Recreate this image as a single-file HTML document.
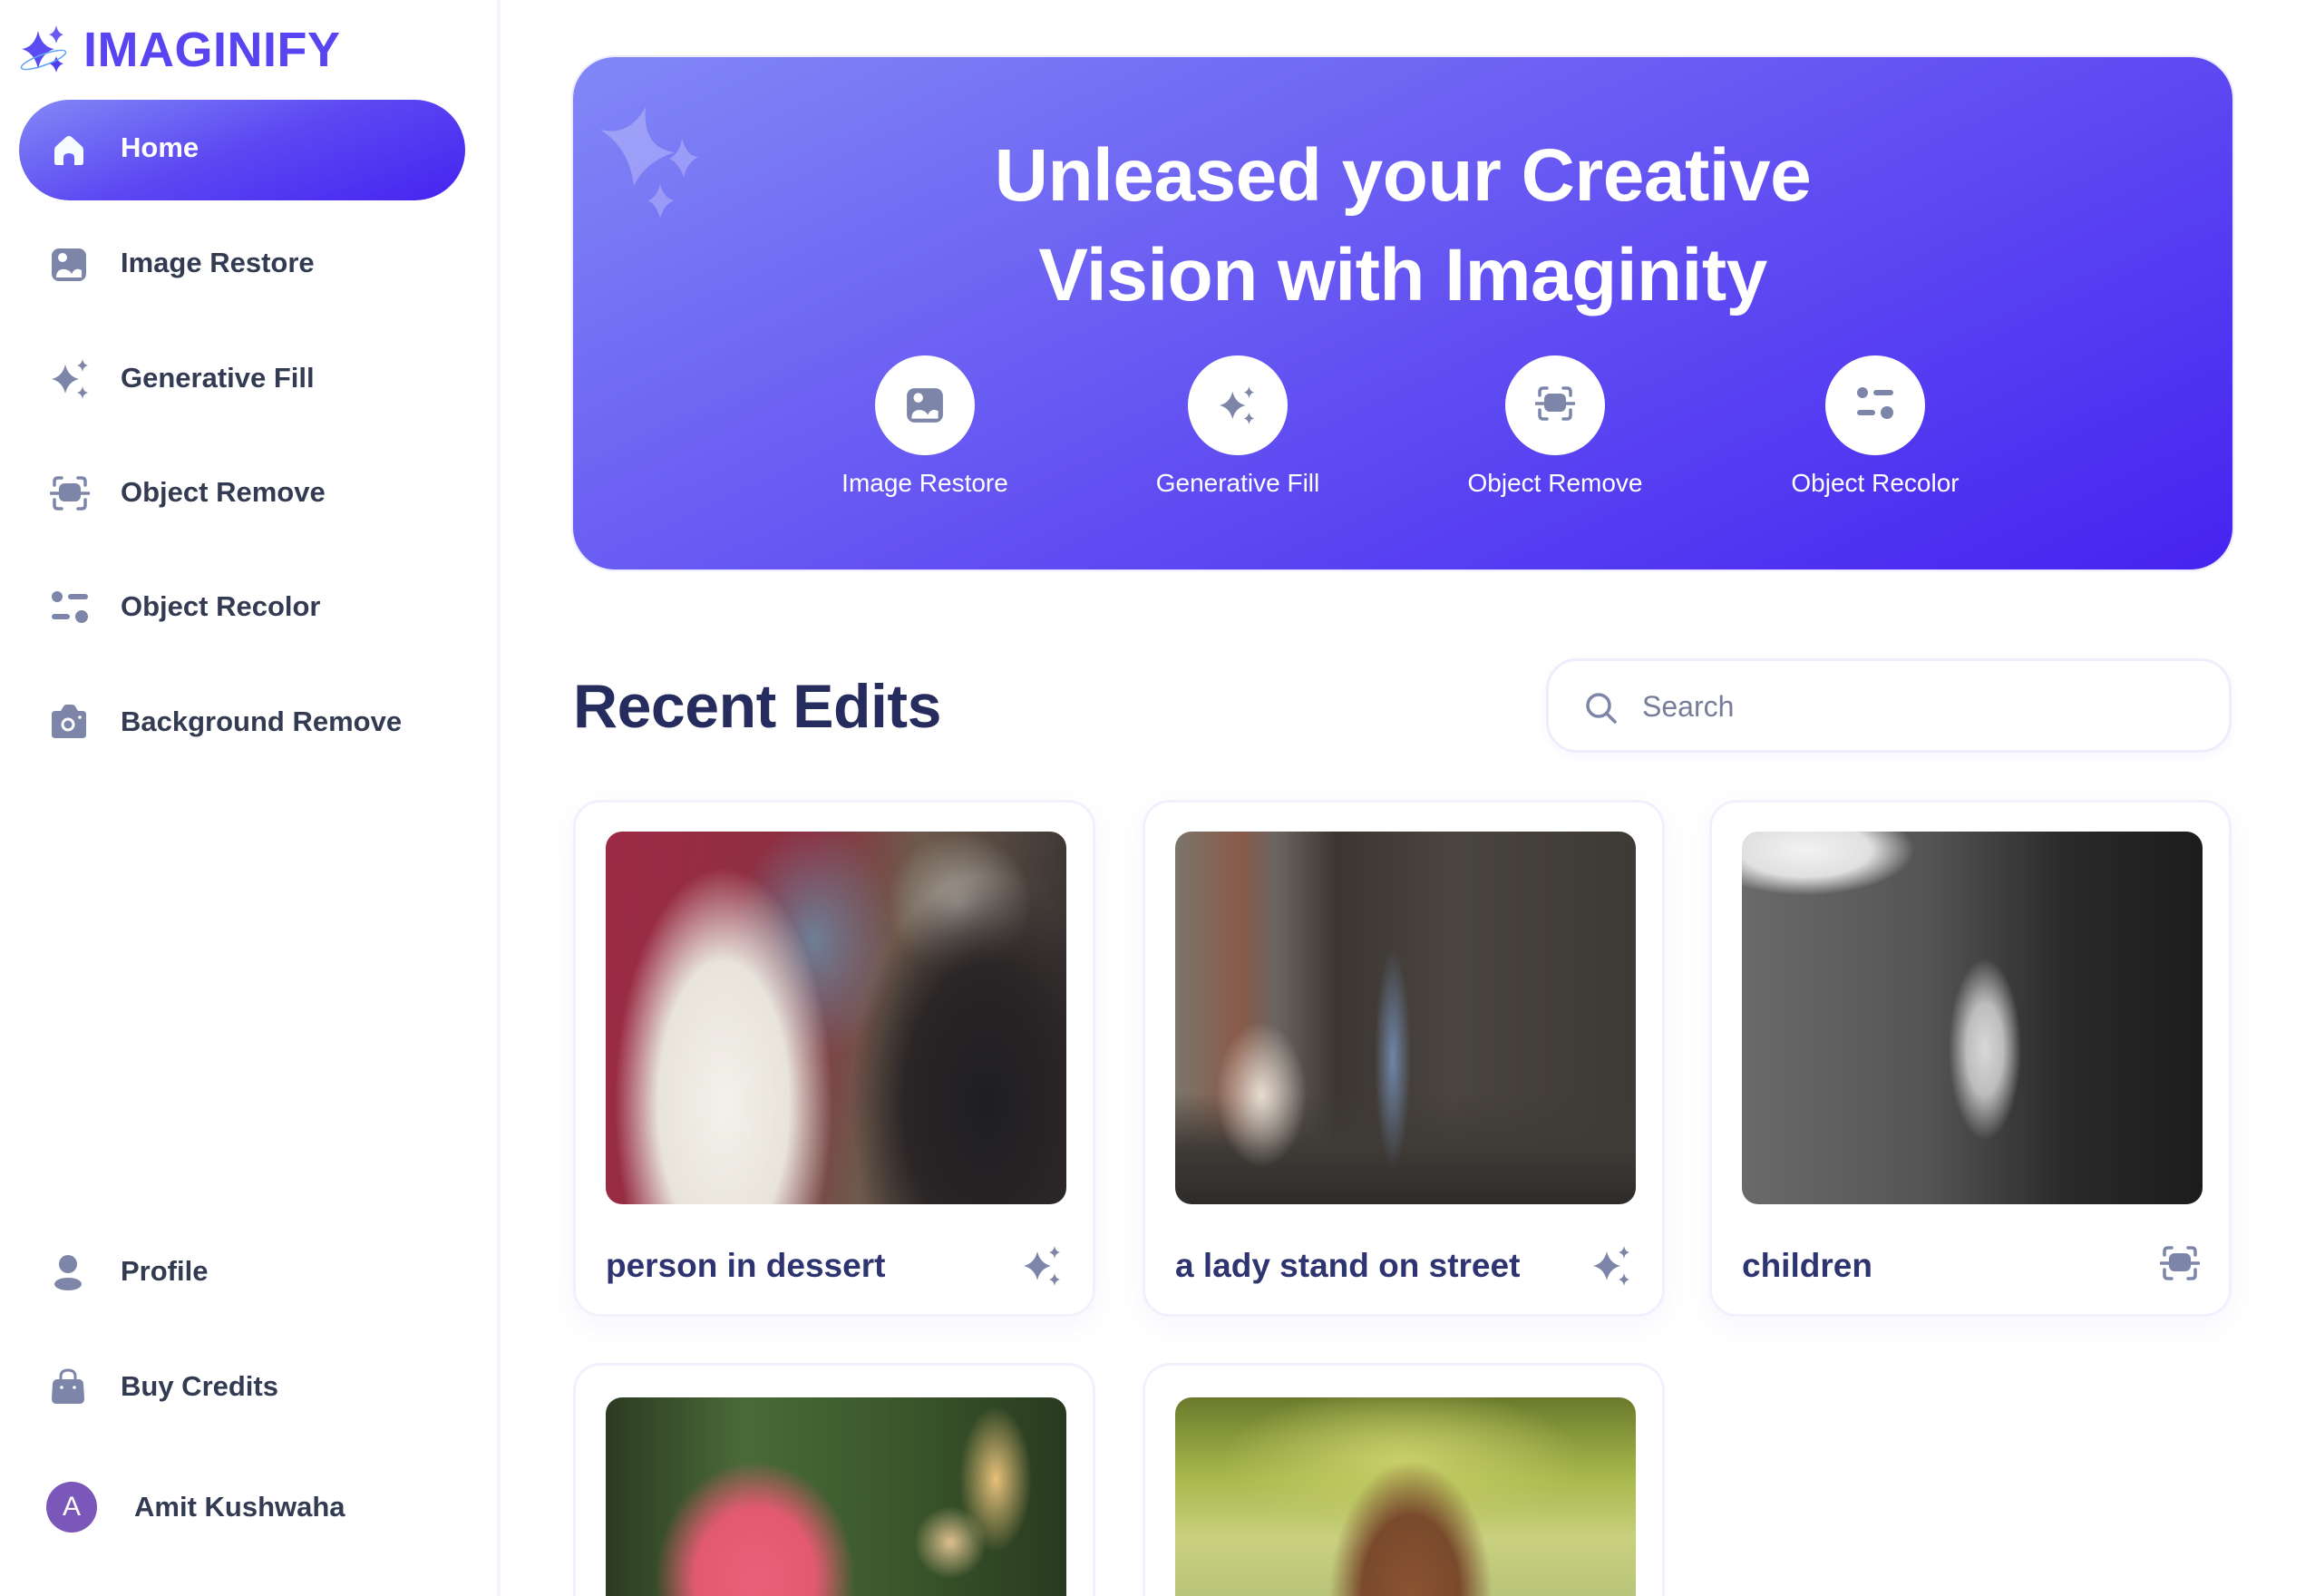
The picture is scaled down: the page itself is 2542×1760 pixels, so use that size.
<!DOCTYPE html>
<html><head><meta charset="utf-8">
<style>
*{margin:0;padding:0;box-sizing:border-box}
html,body{width:2542px;height:1760px;overflow:hidden;background:#fff}
body{font-family:"Liberation Sans",sans-serif;position:relative}
#wrap{position:absolute;left:0;top:0;width:2542px;height:1760px;overflow:hidden}
.side{position:absolute;left:0;top:0;width:552px;height:1760px;background:#fff;border-right:4px solid #f4f3fd}
.logo{position:absolute;left:92px;top:24px;font-size:54px;font-weight:700;color:#5844f0;letter-spacing:0.5px}
.home{position:absolute;left:21px;top:110px;width:492px;height:111px;border-radius:56px;background:linear-gradient(160deg,#8389f6 0%,#5b47f2 50%,#4624f0 100%)}
.nav{position:absolute;left:133px;font-size:31px;font-weight:700;color:#333b52;line-height:40px}
.ic{position:absolute;left:55px}
.banner{position:absolute;left:632px;top:63px;width:1830px;height:565px;border-radius:46px;background:linear-gradient(155deg,#8188f6 0%,#6d62f3 35%,#5a44f2 65%,#4623f0 100%);box-shadow:0 0 0 2px #eceafc}
.title{position:absolute;left:0;width:100%;text-align:center;color:#fff;font-size:82px;font-weight:700;letter-spacing:-0.5px}
.circ{position:absolute;width:110px;height:110px;border-radius:50%;background:#fff;top:329px}
.circ svg{position:absolute;left:33px;top:33px}
.lab{position:absolute;top:454px;width:300px;text-align:center;color:#fff;font-size:28px}
.recent{position:absolute;left:632px;top:740px;font-size:68px;font-weight:700;color:#262d5e;letter-spacing:-0.5px}
.search{position:absolute;left:1705px;top:726px;width:756px;height:104px;border:3px solid #eeedfb;border-radius:34px;box-shadow:0 4px 10px rgba(120,110,240,0.06)}
.search span{position:absolute;left:103px;top:32px;font-size:32px;color:#777c98}
.card{position:absolute;width:576px;height:570px;border:3px solid #f1f0fd;border-radius:30px;background:#fff;box-shadow:0 10px 30px rgba(110,100,240,0.06)}
.card.cut{height:257px;border-bottom:none;border-radius:30px 30px 0 0;box-shadow:none}
.img{position:absolute;left:33px;top:32px;width:508px;height:411px;border-radius:18px;overflow:hidden}
.cut .img{top:35px;height:222px;border-radius:18px 18px 0 0}
.ct{position:absolute;left:33px;top:490px;font-size:37px;font-weight:700;color:#2e3470}
.cic{position:absolute;right:32px;top:488px}
</style></head><body><div id="wrap">

<div class="side">
  <svg style="position:absolute;left:20px;top:24px" width="60" height="60" viewBox="0 0 60 60">
    <path d="M22 10 Q26 28 40 30 Q26 34 22 52 Q18 34 4 30 Q18 28 22 10Z" fill="#5b4bf2"/>
    <path d="M42 4 Q44 13 50 14 Q44 16 42 24 Q40 16 34 14 Q40 13 42 4Z" fill="#6a5cf3"/>
    <path d="M42 38 Q44 45 50 46 Q44 48 42 56 Q40 48 34 46 Q40 45 42 38Z" fill="#4f3ef0"/>
    <ellipse cx="28" cy="42" rx="26" ry="6" fill="none" stroke="#5fa2f5" stroke-width="1.5" transform="rotate(-20 28 42)"/>
  </svg>
  <div class="logo">IMAGINIFY</div>
  <div class="home">
    <svg style="position:absolute;left:37px;top:38px" width="36" height="36" viewBox="0 0 36 36"><path d="M18 2 Q20 2 22 4 L32 13 Q34 15 34 18 L34 31 Q34 34 31 34 L24 34 L24 26 Q24 21 18 21 Q12 21 12 26 L12 34 L5 34 Q2 34 2 31 L2 18 Q2 15 4 13 L14 4 Q16 2 18 2Z" fill="#f5fbff"/></svg>
    <div style="position:absolute;left:112px;top:35px;font-size:31px;font-weight:700;color:#fff">Home</div>
  </div>

  <svg class="ic" style="top:272px" width="42" height="40" viewBox="0 0 42 40"><rect x="2" y="2" width="38" height="36" rx="8" fill="#7d86a8"/><circle cx="14" cy="12" r="5" fill="#fff"/><path d="M7 34 Q7 24 17 25 Q22 26 24 30 Q28 22 35 26 L35 34Z" fill="#fff"/></svg>
  <div class="nav" style="top:270px">Image Restore</div>

  <svg class="ic" style="top:395px" width="46" height="46" viewBox="0 0 46 46"><path d="M17 7 Q20 20 32 23 Q20 26 17 39 Q14 26 2 23 Q14 20 17 7Z" fill="#7d86a8"/><path d="M36 1 Q37 7 42 8 Q37 9 36 15 Q35 9 30 8 Q35 7 36 1Z" fill="#7d86a8"/><path d="M36 31 Q37 37 42 38 Q37 39 36 45 Q35 39 30 38 Q35 37 36 31Z" fill="#7d86a8"/></svg>
  <div class="nav" style="top:397px">Generative Fill</div>

  <svg class="ic" style="top:524px" width="44" height="40" viewBox="0 0 44 40"><g fill="none" stroke="#7d86a8" stroke-width="3.5" stroke-linecap="round"><path d="M5 11 V7 Q5 3 9 3 H13"/><path d="M31 3 H35 Q39 3 39 7 V11"/><path d="M5 27 V33 Q5 37 9 37 H13"/><path d="M31 37 H35 Q39 37 39 33 V27"/><path d="M1 20 H43"/></g><rect x="10" y="9" width="24" height="20" rx="6" fill="#7d86a8"/></svg>
  <div class="nav" style="top:523px">Object Remove</div>

  <svg class="ic" style="top:650px" width="44" height="40" viewBox="0 0 44 40"><circle cx="8" cy="8" r="6" fill="#7d86a8"/><rect x="20" y="5" width="22" height="6" rx="3" fill="#7d86a8"/><rect x="2" y="27" width="20" height="6" rx="3" fill="#7d86a8"/><circle cx="35" cy="30" r="7" fill="#7d86a8"/></svg>
  <div class="nav" style="top:649px">Object Recolor</div>

  <svg class="ic" style="top:776px" width="42" height="40" viewBox="0 0 42 40"><path d="M6 8 H12 L15 3 Q16 1 19 1 H24 Q27 1 28 3 L31 8 H36 Q40 8 40 12 V34 Q40 38 36 38 H6 Q2 38 2 34 V12 Q2 8 6 8Z" fill="#7d86a8"/><circle cx="20" cy="23" r="6" fill="none" stroke="#fff" stroke-width="3"/><circle cx="33" cy="15" r="1.8" fill="#fff"/></svg>
  <div class="nav" style="top:776px">Background Remove</div>

  <svg class="ic" style="top:1383px" width="40" height="42" viewBox="0 0 40 42"><circle cx="20" cy="11" r="10" fill="#7d86a8"/><ellipse cx="20" cy="33" rx="15" ry="7" fill="#7d86a8"/></svg>
  <div class="nav" style="top:1382px">Profile</div>

  <svg class="ic" style="top:1508px" width="40" height="42" viewBox="0 0 40 42"><path d="M12 14 V10 Q12 3 20 3 Q28 3 28 10 V14" fill="none" stroke="#7d86a8" stroke-width="3"/><path d="M8 13 H32 Q36 13 37 18 L38 34 Q38 40 33 40 H7 Q2 40 2 34 L3 18 Q4 13 8 13Z" fill="#7d86a8"/><circle cx="13" cy="22" r="1.8" fill="#fff"/><circle cx="27" cy="22" r="1.8" fill="#fff"/></svg>
  <div class="nav" style="top:1509px">Buy Credits</div>

  <div style="position:absolute;left:51px;top:1634px;width:56px;height:56px;border-radius:50%;background:#7b57b9;color:#fff;font-size:30px;text-align:center;line-height:56px">A</div>
  <div class="nav" style="left:148px;top:1642px">Amit Kushwaha</div>
</div>

<div class="banner">
  <svg style="position:absolute;left:22px;top:50px" width="140" height="140" viewBox="0 0 140 140" opacity="0.25"><path d="M58 5 Q54 50 90 55 Q58 65 45 92 Q40 50 8 30 Q40 38 58 5Z" fill="#fff"/><path d="M98 40 Q104 60 116 60 Q104 66 100 82 Q94 66 84 62 Q96 56 98 40Z" fill="#fff"/><path d="M74 90 Q78 106 90 108 Q78 112 74 128 Q70 112 60 108 Q70 106 74 90Z" fill="#fff"/></svg>
  <div class="title" style="top:84px">Unleased your Creative</div>
  <div class="title" style="top:194px">Vision with Imaginity</div>

  <div class="circ" style="left:333px"><svg width="44" height="44" viewBox="0 0 42 40"><rect x="2" y="2" width="38" height="36" rx="8" fill="#7d86a8"/><circle cx="14" cy="12" r="5" fill="#fff"/><path d="M7 34 Q7 24 17 25 Q22 26 24 30 Q28 22 35 26 L35 34Z" fill="#fff"/></svg></div>
  <div class="lab" style="left:238px">Image Restore</div>

  <div class="circ" style="left:678px"><svg width="44" height="44" viewBox="0 0 46 46"><path d="M17 7 Q20 20 32 23 Q20 26 17 39 Q14 26 2 23 Q14 20 17 7Z" fill="#7d86a8"/><path d="M36 1 Q37 7 42 8 Q37 9 36 15 Q35 9 30 8 Q35 7 36 1Z" fill="#7d86a8"/><path d="M36 31 Q37 37 42 38 Q37 39 36 45 Q35 39 30 38 Q35 37 36 31Z" fill="#7d86a8"/></svg></div>
  <div class="lab" style="left:583px">Generative Fill</div>

  <div class="circ" style="left:1028px"><svg width="44" height="40" viewBox="0 0 44 40"><g fill="none" stroke="#7d86a8" stroke-width="3.5" stroke-linecap="round"><path d="M5 11 V7 Q5 3 9 3 H13"/><path d="M31 3 H35 Q39 3 39 7 V11"/><path d="M5 27 V33 Q5 37 9 37 H13"/><path d="M31 37 H35 Q39 37 39 33 V27"/><path d="M1 20 H43"/></g><rect x="10" y="9" width="24" height="20" rx="6" fill="#7d86a8"/></svg></div>
  <div class="lab" style="left:933px">Object Remove</div>

  <div class="circ" style="left:1381px"><svg width="44" height="40" viewBox="0 0 44 40"><circle cx="8" cy="8" r="6" fill="#7d86a8"/><rect x="20" y="5" width="22" height="6" rx="3" fill="#7d86a8"/><rect x="2" y="27" width="20" height="6" rx="3" fill="#7d86a8"/><circle cx="35" cy="30" r="7" fill="#7d86a8"/></svg></div>
  <div class="lab" style="left:1286px">Object Recolor</div>
</div>

<div class="recent">Recent Edits</div>
<div class="search">
  <svg style="position:absolute;left:38px;top:32px" width="40" height="40" viewBox="0 0 40 40"><circle cx="17" cy="17" r="12" fill="none" stroke="#7d86a8" stroke-width="3.5"/><path d="M26 26 L35 35" stroke="#7d86a8" stroke-width="3.5" stroke-linecap="round"/></svg>
  <span>Search</span>
</div>

<div class="card" style="left:632px;top:882px">
  <div class="img" style="background:
    radial-gradient(ellipse 120px 260px at 130px 300px,#f4f1ea 0%,#e8e4dc 60%,transparent 100%),
    radial-gradient(ellipse 90px 130px at 230px 120px,#6d7f96 0%,transparent 100%),
    radial-gradient(ellipse 150px 250px at 420px 300px,#1e1e22 0%,#2a2526 60%,transparent 100%),
    radial-gradient(ellipse 80px 80px at 390px 80px,#a9a39b 0%,transparent 100%),
    linear-gradient(100deg,#9e2a45 0%,#8b3040 40%,#6d5a4c 60%,#2b2a2c 100%)"></div>
  <div class="ct">person in dessert</div>
  <svg class="cic" width="46" height="46" viewBox="0 0 46 46"><path d="M17 7 Q20 20 32 23 Q20 26 17 39 Q14 26 2 23 Q14 20 17 7Z" fill="#7d86a8"/><path d="M36 1 Q37 7 42 8 Q37 9 36 15 Q35 9 30 8 Q35 7 36 1Z" fill="#7d86a8"/><path d="M36 31 Q37 37 42 38 Q37 39 36 45 Q35 39 30 38 Q35 37 36 31Z" fill="#7d86a8"/></svg>
</div>

<div class="card" style="left:1260px;top:882px">
  <div class="img" style="background:
    radial-gradient(ellipse 20px 120px at 240px 250px,#6f86a8 0%,transparent 100%),
    radial-gradient(ellipse 50px 80px at 95px 290px,#e8ddd2 0%,transparent 100%),
    linear-gradient(180deg,transparent 0%,transparent 70%,#3f3b37 85%,#2e2c2a 100%),
    linear-gradient(90deg,#7b756a 0%,#8a5a4a 14%,#6a6560 22%,#3b3632 35%,#4a4540 60%,#3d3935 100%)"></div>
  <div class="ct">a lady stand on street</div>
  <svg class="cic" width="46" height="46" viewBox="0 0 46 46"><path d="M17 7 Q20 20 32 23 Q20 26 17 39 Q14 26 2 23 Q14 20 17 7Z" fill="#7d86a8"/><path d="M36 1 Q37 7 42 8 Q37 9 36 15 Q35 9 30 8 Q35 7 36 1Z" fill="#7d86a8"/><path d="M36 31 Q37 37 42 38 Q37 39 36 45 Q35 39 30 38 Q35 37 36 31Z" fill="#7d86a8"/></svg>
</div>

<div class="card" style="left:1885px;top:882px">
  <div class="img" style="background:
    radial-gradient(ellipse 40px 100px at 268px 240px,#d8d8d8 0%,#bdbdbd 50%,transparent 100%),
    radial-gradient(ellipse 120px 50px at 70px 20px,#f2f2f2 0%,#e0e0e0 60%,transparent 100%),
    linear-gradient(90deg,#6a6a6a 0%,#555 40%,#2a2a2a 70%,#1c1c1c 100%)"></div>
  <div class="ct">children</div>
  <svg class="cic" width="44" height="40" viewBox="0 0 44 40"><g fill="none" stroke="#7d86a8" stroke-width="3.5" stroke-linecap="round"><path d="M5 11 V7 Q5 3 9 3 H13"/><path d="M31 3 H35 Q39 3 39 7 V11"/><path d="M5 27 V33 Q5 37 9 37 H13"/><path d="M31 37 H35 Q39 37 39 33 V27"/><path d="M1 20 H43"/></g><rect x="10" y="9" width="24" height="20" rx="6" fill="#7d86a8"/></svg>
</div>

<div class="card cut" style="left:632px;top:1503px">
  <div class="img" style="background:
    radial-gradient(ellipse 110px 130px at 165px 200px,#e96078 0%,#e25a70 60%,transparent 100%),
    radial-gradient(ellipse 40px 80px at 430px 90px,#e6c07a 0%,transparent 100%),
    radial-gradient(ellipse 40px 40px at 380px 160px,#ddc090 0%,transparent 100%),
    linear-gradient(90deg,#2c3a22 0%,#4a6a38 30%,#3c5a2c 60%,#2a3a20 100%)"></div>
</div>

<div class="card cut" style="left:1260px;top:1503px">
  <div class="img" style="background:
    radial-gradient(ellipse 90px 150px at 260px 220px,#8a5332 0%,#7a4a2c 60%,transparent 100%),
    radial-gradient(ellipse 200px 80px at 250px 70px,#c8cf6a 0%,transparent 100%),
    linear-gradient(180deg,#6a7a2c 0%,#a8b84c 40%,#c9d07e 70%,#b8c47a 100%)"></div>
</div>

</div></body></html>
